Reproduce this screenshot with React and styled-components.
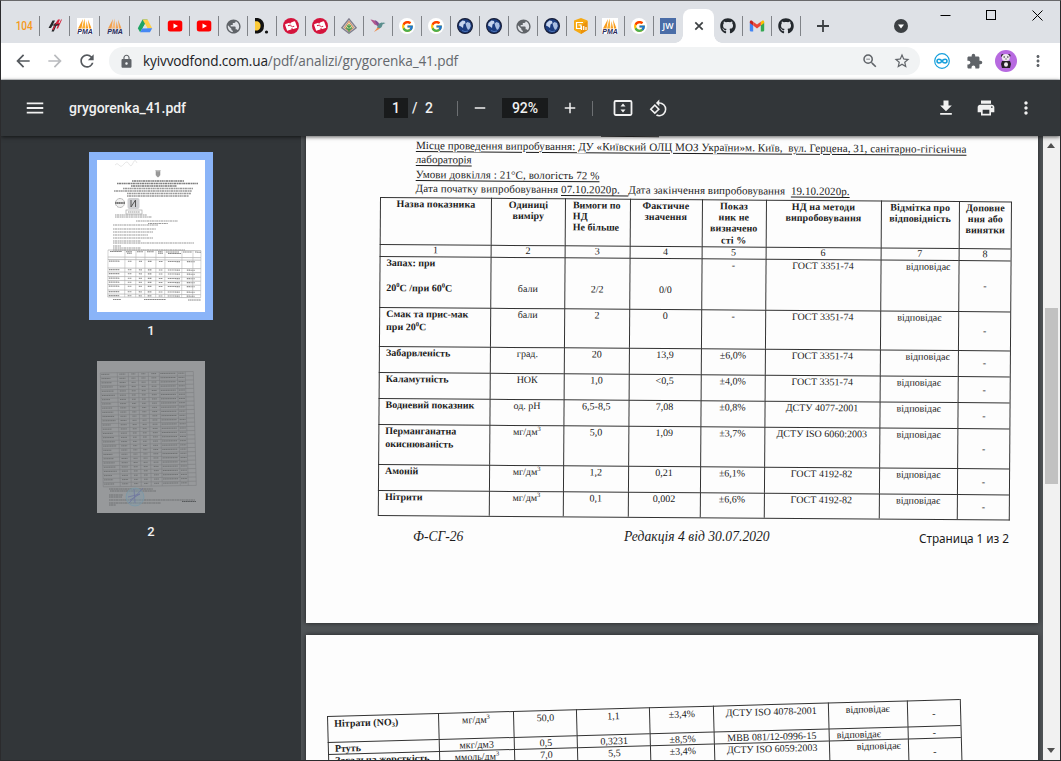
import React from "react";
import styled, { createGlobalStyle, css } from "styled-components";
import {
  MdArrowBack, MdArrowForward, MdRefresh, MdLock, MdMenu, MdPrint, MdMoreVert,
  MdPublic, MdExtension, MdStarBorder, MdFileDownload, MdAdd, MdRemove,
  MdRotate90DegreesCcw, MdOutlineZoomOut,
} from "react-icons/md";
import { FaGithub } from "react-icons/fa";
import { FcGoogle } from "react-icons/fc";

const Global = createGlobalStyle`
  * { box-sizing: border-box; }
  html, body { margin: 0; padding: 0; overflow: hidden; }
  svg { display: block; flex: none; }
`;

/* ---------- window and browser chrome ---------- */

const Window = styled.div`
  width: 1061px;
  height: 761px;
  display: flex;
  flex-direction: column;
  overflow: hidden;
  border: 1px solid #2b2b2d;
  border-top-color: #69696b;
  background: #323639;
`;

const TabStrip = styled.div`
  flex: none;
  height: 42px;
  padding-left: 9px;
  display: flex;
  align-items: flex-end;
  background: #dee1e6;
`;

const Tab = styled.div`
  flex: none;
  width: ${(p) => (p.$wide ? 30 : 29)}px;
  height: 34px;
  padding-right: 1px;
  display: flex;
  align-items: center;
  justify-content: center;
  position: relative;
  &::after {
    content: "";
    display: ${(p) => (p.$last ? "none" : "block")};
    position: absolute;
    right: 0;
    top: 7px;
    width: 1px;
    height: 20px;
    background: #808388;
  }
`;

const ActiveTab = styled.div`
  flex: none;
  width: 31px;
  height: 34px;
  display: flex;
  align-items: center;
  justify-content: center;
  position: relative;
  background: #fff;
  border-radius: 8px 8px 0 0;
  &::before, &::after {
    content: "";
    position: absolute;
    bottom: 0;
    width: 8px;
    height: 8px;
  }
  &::before { left: -8px; background: radial-gradient(circle at 0 0, transparent 7.5px, #fff 8px); }
  &::after { right: -8px; background: radial-gradient(circle at 100% 0, transparent 7.5px, #fff 8px); }
`;

const NewTab = styled.div`
  margin-left: 16px;
  height: 34px;
  display: flex;
  align-items: center;
`;

const TabSearch = styled.div`
  margin-left: 64px;
  height: 34px;
  display: flex;
  align-items: center;
`;

const WindowButtons = styled.div`
  margin-left: auto;
  align-self: flex-start;
  padding: 9px 17px 0 0;
  display: flex;
  gap: 35px;
`;

const NavBar = styled.div`
  flex: none;
  height: 37px;
  padding-left: 12px;
  display: flex;
  align-items: center;
  background: #fff;
  border-bottom: 1px solid #d5d7da;
  color: #5f6368;
`;

const NavButton = styled.div`
  width: 20px;
  margin-right: 12px;
  display: flex;
  justify-content: center;
  color: ${(p) => (p.$off ? "#b9bbbe" : "#55595e")};
`;

const AddressBar = styled.div`
  flex: none;
  width: 811px;
  height: 28px;
  padding: 0 9px 0 10px;
  display: flex;
  align-items: center;
  background: #f1f3f4;
  border-radius: 14px;
`;

const Url = styled.div`
  margin: 0 auto 0 9px;
  font: 13.6px/20px "Open Sans", "Noto Sans", sans-serif;
  letter-spacing: -0.13px;
  color: #64686d;
  white-space: nowrap;
  b { font-weight: 400; color: #202124; }
`;

const AddressIcons = styled.div`
  display: flex;
  align-items: center;
  gap: 14px;
`;

const Extensions = styled.div`
  margin-left: 6px;
  display: grid;
  grid-template-columns: repeat(4, 32px);
  align-items: center;
  justify-items: center;
`;

/* ---------- pdf viewer ---------- */

const PdfBar = styled.div`
  flex: none;
  height: 56px;
  padding: 0 24px 0 23px;
  display: flex;
  align-items: center;
  background: #323639;
  color: #f1f1f1;
  font: 500 14px/20px Roboto, sans-serif;
  position: relative;
  z-index: 2;
  box-shadow: 0 1px 4px rgba(0, 0, 0, 0.65);
`;

const PdfTitle = styled.div`
  width: 315px;
  margin-left: 23px;
  letter-spacing: -0.02px;
`;

const Field = styled.div`
  width: ${(p) => p.$w}px;
  height: 20px;
  background: #191b1c;
  text-align: center;
`;

const PageCount = styled.div`
  width: 49px;
  padding-left: 4px;
  word-spacing: 4px;
`;

const Divider = styled.i`
  width: 1px;
  height: 15px;
  background: #6d7073;
`;

const ZoomGroup = styled.div`
  width: 134px;
  display: flex;
  align-items: center;
  justify-content: space-between;
  padding: 0 13px;
`;

const ViewGroup = styled.div`
  padding-left: 20px;
  display: flex;
  align-items: center;
  gap: 16px;
`;

const PdfActions = styled.div`
  margin-left: auto;
  display: flex;
  gap: 20px;
`;

const Viewer = styled.div`
  flex: 1;
  min-height: 0;
  display: flex;
`;

const Sidebar = styled.div`
  flex: none;
  width: 300px;
  padding-top: 16px;
  display: flex;
  flex-direction: column;
  align-items: center;
  color: #f1f1f1;
  font: 500 13px/20px Roboto, sans-serif;
`;

const Thumb = styled.div`
  padding: 8px;
  background: ${(p) => (p.$active ? "#8ab4f8" : "transparent")};
`;

const ThumbLabel = styled.div`
  height: 33px;
  line-height: 21px;
`;

const Pages = styled.div`
  flex: none;
  width: 742px;
  padding: 0 5px;
  display: flex;
  flex-direction: column;
  gap: 12px;
  background: #505457;
  overflow: hidden;
`;

const Sheet = styled.div`
  flex: none;
  height: ${(p) => p.$h}px;
  padding: ${(p) => p.$pad};
  background: #fdfdfd;
  box-shadow: 0 0 5px rgba(0, 0, 0, 0.6);
  color: #1c1c1c;
  font-family: "Liberation Serif", serif;
  overflow: hidden;
`;

const Scrollbar = styled.div`
  flex: 1;
  padding: 7px 2px 7px 1px;
  display: flex;
  flex-direction: column;
  align-items: center;
  background: #f1f1f1;
`;

const ScrollThumb = styled.div`
  width: 13px;
  height: 176px;
  margin: 160px 0 auto;
  background: #c1c1c1;
`;

/* ---------- scanned document ---------- */

const CutRule = styled.div`
  width: 58px;
  height: 1px;
  margin-left: 295px;
  background: #333;
  transform: rotate(0.6deg);
`;

const Intro = styled.div`
  height: 60px;
  padding: 0.5px 0 0 110px;
  font-size: 11px;
  line-height: 14.6px;
  white-space: pre;
  transform: rotate(0.4deg);
  transform-origin: 110px 0;
`;

const IntroLine = styled.div`
  letter-spacing: ${(p) => p.$ls || 0}px;
`;

const Under = styled.span`
  text-decoration: underline;
  text-decoration-thickness: 1px;
  text-underline-offset: 1.5px;
`;

const Table = styled.div`
  display: grid;
  grid-template-columns: ${(p) => p.$cols};
  grid-template-rows: ${(p) => p.$rows};
  width: max-content;
  margin-left: ${(p) => p.$left}px;
  border-right: 1px solid #333;
  border-bottom: 1px solid #333;
  transform: rotate(${(p) => p.$turn}deg);
  transform-origin: 0 0;
`;

const Cell = styled.div`
  border-left: 1px solid #333;
  border-top: 1px solid #333;
  font-size: 10px;
  line-height: 11.8px;
  white-space: pre;
  text-align: center;
  padding: ${(p) => p.$top ?? 0}px ${(p) => Math.max(0, -(p.$shift || 0))}px 0 ${(p) => Math.max(0, p.$shift || 0)}px;
  ${(p) => p.$kind === "head" && css`font-weight: 700; line-height: 11.2px; letter-spacing: 0.1px;`}
  ${(p) => p.$kind === "name" && css`font-weight: 700; line-height: 12.4px; text-align: left; padding-left: 6px;`}
  ${(p) => p.$kind === "left" && css`font-weight: 700; line-height: 11.2px; text-align: left; padding-left: 7px;`}
  ${(p) => p.$kind === "mid" && css`display: flex; align-items: center; justify-content: center; padding-top: 0;`}
  sup { font-size: 6.5px; line-height: 0; vertical-align: 4px; }
  sub { font-size: 6.5px; line-height: 0; vertical-align: -1.5px; }
`;

const Footer = styled.div`
  display: flex;
  align-items: baseline;
  margin: 11px 0 0 107px;
  font-size: 13.6px;
  line-height: 19px;
  white-space: nowrap;
`;

const FooterCode = styled.i`
  width: 211px;
`;

const FooterEdition = styled.i`
  width: 295px;
  letter-spacing: 0.02px;
`;

const FooterPage = styled.span`
  font: 11.8px/18px "Noto Sans", sans-serif;
  letter-spacing: -0.07px;
  position: relative;
  top: 2px;
`;

const DM3 = <>мг/дм<sup>3</sup></>;

const HEAD = [
  ["head", "Назва показника"], ["head", "Одиниці\nвиміру"], ["left", "Вимоги по\nНД\nНе більше"],
  ["head", "Фактичне\nзначення"], ["head", "Показ\nник не\nвизначено\nсті %"],
  ["head", "НД на методи\nвипробовування"], ["head", "Відмітка про\nвідповідність"], ["head", "Доповне\nння або\nвинятки"],
];

const ROWS = [
  { name: <>{"Запах: при\n\n20"}<sup>0</sup>С /при 60<sup>0</sup>С</>, vals: ["бали", "2/2", "0/0"], err: "-", nd: "ГОСТ 3351-74", shift: 17, top: 25 },
  { name: <>{"Смак та прис-мак\nпри 20"}<sup>0</sup>С</>, vals: ["бали", "2", "0"], err: "-", nd: "ГОСТ 3351-74" },
  { name: "Забарвленість", vals: ["град.", "20", "13,9"], err: "±6,0%", nd: "ГОСТ 3351-74", shift: 17 },
  { name: "Каламутність", vals: ["НОК", "1,0", "<0,5"], err: "±4,0%", nd: "ГОСТ 3351-74" },
  { name: "Водневий показник", vals: ["од. рН", "6,5-8,5", "7,08"], err: "±0,8%", nd: "ДСТУ 4077-2001" },
  { name: "Перманганатна\nокиснюваність", vals: [DM3, "5,0", "1,09"], err: "±3,7%", nd: "ДСТУ ISO 6060:2003" },
  { name: "Амоній", vals: [DM3, "1,2", "0,21"], err: "±6,1%", nd: "ГОСТ 4192-82" },
  { name: "Нітрити", vals: [DM3, "0,1", "0,002"], err: "±6,6%", nd: "ГОСТ 4192-82" },
];

const ROWS2 = [
  { name: <>Нітрати (NO<sub>3</sub>)</>, vals: [DM3, "50,0", "1,1"], err: "±3,4%", nd: "ДСТУ ISO 4078-2001", base: 0.5 },
  { name: "Ртуть", vals: ["мкг/дм3", "0,5", "0,3231"], err: "±8,5%", nd: "МВВ 081/12-0996-15", shift: -19 },
  { name: "Загальна жорсткість", vals: [<>ммоль/дм<sup>3</sup></>, "7,0", "5,5"], err: "±3,4%", nd: "ДСТУ ISO 6059:2003", shift: 20 },
];

function Row({ r }) {
  const base = r.base || 0;
  return (
    <>
      <Cell $kind="name" $top={base}>{r.name}</Cell>
      {r.vals.map((v, i) => <Cell key={i} $top={r.top || base}>{v}</Cell>)}
      <Cell $top={base}>{r.err}</Cell>
      <Cell $top={base}>{r.nd}</Cell>
      <Cell $top={base} $shift={r.shift}>відповідає</Cell>
      <Cell $kind="mid">-</Cell>
    </>
  );
}

/* ---------- tab icons ---------- */

const Svg = ({ s = 16, children, ...rest }) => (
  <svg width={s} height={s} viewBox="0 0 16 16" {...rest}>{children}</svg>
);

const Label104 = styled.span`
  font: 500 12px/16px Roboto, sans-serif;
  color: #f59a1c;
  transform: scaleX(0.84);
`;

const Pma = ({ plain }) => (
  <Svg>
    {!plain && <rect width="16" height="16" fill="#fff" />}
    <path d="M1 10.500 6 1l-1.500 9.500zM11 1.500l3.500 9H12zM9.500 3l1.700 7.500H9z" fill={plain ? "#f3a04b" : "#f99d1c"} />
    <path d="M5 10.500 7.500 .500 8.500 10.500z" fill={plain ? "#f7b877" : "#fbb034"} />
    <text x="8" y="15.800" textAnchor="middle" fontFamily="Liberation Sans, sans-serif" fontStyle="italic" fontWeight="700" fontSize="6.500" textLength="15.500" lengthAdjust="spacingAndGlyphs" fill="#272a5c">PMA</text>
  </Svg>
);

const Hp = () => (
  <Svg>
    <path d="M5.500 2.500 1.500 10H4l1.500-2.500H7L4.500 13.500h2.300L10.500 5H8L7 6.500H6l2-4z" fill="#27282b" />
    <path d="M11 1.500h2L11.500 5h1L14 1.500h1L11 10.500H9.500l1.500-3.500H9L6.500 12H5L9 4.500z" fill="#d2233c" />
    <path d="m8 6.500 4-.500-.500 1.500-4 .500z" fill="#27282b" />
  </Svg>
);

const Drive = () => (
  <Svg>
    <path d="M5.500 1.500h5L8 5.900 3.100 14.200.800 10.300z" fill="#1fa463" />
    <path d="M5.500 1.500h5l4.700 8.800h-4.700z" fill="#ffd04b" />
    <path d="M3.100 14.200h9.800l2.300-3.900H5.500z" fill="#4688f4" />
    <path d="M8 6.300 5.800 10.200h4.500z" fill="#dee1e6" />
  </Svg>
);

const YouTube = () => (
  <Svg>
    <rect x=".8" y="2.500" width="14.500" height="11" rx="2.500" fill="#f00" />
    <path d="m6.500 5.500 4.500 2.500-4.500 2.500z" fill="#fff" />
  </Svg>
);

const DLogo = () => (
  <Svg>
    <path d="M1 0h3a8 8 0 0 1 0 15.500H1z" fill="#111" />
    <path d="M1 3.300h2.500a5 5 0 0 1 0 9.200H1z" fill="#fccb3a" />
    <circle cx="12.500" cy="14" r="1.600" fill="#111" />
  </Svg>
);

const SLogo = () => (
  <Svg>
    <circle cx="8" cy="8" r="8" fill="#d4143c" />
    <g transform="rotate(-20 8 8)">
      <rect x="2.800" y="4.300" width="4.900" height="7" rx=".8" fill="#fff" />
      <rect x="8.500" y="4.700" width="4.900" height="7" rx=".8" fill="#fff" />
      <path d="M5.200 6.800h2.500M8.500 9.200h2.500" stroke="#d4143c" strokeWidth="1" />
      <path d="M7.200 9.500h2M7.200 6h2" stroke="#fff" strokeWidth="1.200" />
    </g>
  </Svg>
);

const Diamond = () => (
  <Svg>
    <path d="m8 .800 7.200 9-7.200 5.500-7.200-5.500z" fill="#c9cdc9" stroke="#7f7d8c" strokeWidth="1.300" />
    <path d="m8 3.200 4.500 6.500L8 13.500 3.500 9.700z" fill="#efd6a0" stroke="#d5734f" strokeWidth=".8" />
    <path d="M8 6v8M5 9.500l3 3 3-3M6 7.500l2 2 2-2" stroke="#3f9b52" strokeWidth="1.100" fill="none" />
  </Svg>
);

const Bird = () => (
  <Svg>
    <path d="M.500 1.500C5 2 8 4 9 8.500L4.500 6.500z" fill="#b0578d" />
    <path d="M4.500 2C8 3 9.500 5.500 10 8H7.500z" fill="#7f4d91" />
    <path d="M7.500 8c2-4 4-3 5.500-3.500l2.500.500-3 1.500C12 9.500 10.500 11 7 10.500z" fill="#5b8f8e" />
    <path d="M7.500 9.500 4 14 10 10.500z" fill="#ef8b4b" />
  </Svg>
);

const GTab = styled.span`
  width: 16px;
  height: 16px;
  display: flex;
  align-items: center;
  justify-content: center;
  border-radius: 50%;
  background: #fff;
`;

const Earth = () => (
  <Svg>
    <circle cx="8" cy="8" r="7.400" fill="#1b3c80" stroke="#171e38" strokeWidth="1.200" />
    <path d="M2.500 5 5.500 2.500l2.500.500.500 2-2 1.500-.500 3.500-2-1.500L2 7.500z" fill="#c7d5ee" />
    <path d="m8.500 5.500 2-1.500 2.500 1 .800 3-1.300 3-1.500 1L9.500 9z" fill="#a9bee2" />
    <path d="M5 12.500q3 2 6 .500" stroke="#4c74b5" fill="none" />
  </Svg>
);

const Fm = () => (
  <Svg>
    <path d="M1 2.500 8 0l6.500 2.500v9.500L8 16l-7-4z" fill="#f6a912" />
    <path d="M8 8l6.500-5v9L8 16z" fill="#eb920b" />
    <path d="M10 4.500H3.500v6H8V7H5.500M8.500 12V8M10.700 12V8M13 12V9" stroke="#fff" strokeWidth="1.200" fill="none" />
  </Svg>
);

const Jw = () => (
  <Svg>
    <rect width="16" height="16" fill="#4a6da7" />
    <text x="8" y="11.300" textAnchor="middle" fontFamily="Open Sans, sans-serif" fontWeight="600" fontSize="8.800" fill="#fff">JW</text>
  </Svg>
);

const Gmail = () => (
  <Svg>
    <path d="M.800 4.500 4.200 7v6.500H2a1.200 1.200 0 0 1-1.200-1z" fill="#4285f4" />
    <path d="M15.200 4.500 11.800 7v6.500H14a1.200 1.200 0 0 0 1.200-1z" fill="#34a853" />
    <path d="M11.800 3.800V7.500L15.200 5V4c0-1.500-1.500-1.700-2.300-1z" fill="#fbbc04" />
    <path d="M.800 4v1l3.400 2.500V3.800L3.300 3C2.500 2.300.800 2.500.800 4z" fill="#c5221f" />
    <path d="M4.200 3.800v3.700L8 10.400l3.800-2.900V3.800L8 6.600z" fill="#ea4335" />
  </Svg>
);

const Google = () => <GTab><FcGoogle size={13} /></GTab>;
const Globe = () => <MdPublic size={17} color="#5f6368" />;
const Octo = () => <FaGithub size={16} color="#24292e" />;

const TABS = [
  () => <Label104>104</Label104>, Hp, Pma, () => <Pma plain />, Drive, YouTube, YouTube, Globe, DLogo, SLogo, SLogo,
  Diamond, Bird, Google, Google, Earth, Earth, Globe, Earth, Fm, Pma, Google, Jw,
];

/* ---------- page previews ---------- */

function Preview1() {
  const text = [
    [35, 21, 52], [20, 23.5, 81], [34, 26, 46], [26, 28.5, 70], [17, 31, 78], [30, 33.5, 64], [30, 36, 62],
    [18, 55, 32], [18, 57, 37], [39, 61, 42], [51, 63.5, 20], [16, 65, 45], [16, 69, 43], [16, 72, 40],
    [16, 75, 35], [16, 78, 40], [16, 81, 28], [16, 83, 81], [16, 86, 8], [16, 88, 28], [16, 90, 72],
  ];
  const rows = [90, 97, 99.5, 108, 112, 116.5, 120.5, 124.5, 130, 134, 137];
  const cols = [11, 28, 39, 48, 59, 68, 85, 96, 104];
  return (
    <svg width="108" height="152" viewBox="0 0 108 152">
      <rect width="108" height="152" fill="#fff" />
      <path d="M18 5q2-3 4 0t5-1 5 0 4-1 4 0" stroke="#dedede" fill="none" strokeWidth=".7" />
      <path d="M59 10v5q1 2 2 2t2-2v-5l-1 3-1-3-1 3z" fill="#999" stroke="#888" strokeWidth=".5" />
      {text.map(([x, y, w], i) => (
        <path key={i} d={`M${x} ${y}h${w}`} stroke={i < 3 ? "#7d7d7d" : "#999"} strokeWidth={i < 7 ? 1.4 : 1} strokeDasharray="1.4 .4 2.3 .5" />
      ))}
      <circle cx="23" cy="43" r="4.500" fill="#f0f0f0" stroke="#999" strokeDasharray="1 .5" />
      <path d="M18 43h10" stroke="#777" strokeWidth="2" strokeDasharray="1.500 .3" />
      <rect x="30.500" y="38" width="12" height="11" rx="2" fill="#cfd0d3" />
      <path d="M34 40v7l4.500-7v7" stroke="#555" fill="none" />
      <rect x="29" y="50" width="16" height="4" fill="none" stroke="#aaa" strokeWidth=".7" />
      <path d="M31 52h12" stroke="#999" strokeDasharray="1.500 .4" />
      <g transform="rotate(.4 11 90)">
        {rows.map((y) => <path key={y} d={`M11 ${y}h93`} stroke="#999" strokeWidth=".6" />)}
        {cols.map((x) => <path key={x} d={`M${x} 90v47`} stroke="#aaa" strokeWidth=".5" />)}
        {rows.slice(2, -1).map((y) => (
          <path key={y} d={`M12 ${y + 1.6}h11m8 0h4m7 0h3m6 0h4m7 0h4m5 0h12m7 0h8`} stroke="#909090" strokeWidth="1.100" strokeDasharray="1.400 .400" />
        ))}
        <path d="M13 91.500h12m4 0h6m5 0h6m4 0h7m4 0h5m3 0h13m4 0h9m3 0h6M30 93h5m26 0h5m5 0h13" stroke="#888" strokeDasharray="1.400 .3" />
      </g>
      <path d="M16 139.500h8m23 0h22m22 .500h13" stroke="#888" strokeDasharray="1.500 .3" />
    </svg>
  );
}

function Preview2() {
  const rows = Array.from({ length: 28 }, (_, i) => 11 + i * 4.22);
  const cols = [3, 20, 31, 41, 51, 62, 80, 88, 96];
  return (
    <svg width="108" height="152" viewBox="0 0 108 152">
      <rect width="108" height="152" fill="#97999b" />
      <g transform="translate(0 1) skewY(-.9) skewX(1.500)">
        {rows.map((y, i) => (
          <g key={y}>
            <path d={`M3 ${y}h93`} stroke="#7c7e80" strokeWidth=".6" />
            {i < 27 && <path d={`M4 ${y + 1.5}h${8 + ((i * 7) % 6)}M22 ${y + 1.5}h6M34 ${y + 1.5}h4M44 ${y + 1.5}h4M54 ${y + 1.5}h5M63 ${y + 1.5}h15M81 ${y + 1.5}h6`} stroke="#6c6e70" strokeWidth=".9" strokeDasharray="1.400 .300" />}
          </g>
        ))}
        {cols.map((x) => <path key={x} d={`M${x} 11v114`} stroke="#7e8082" strokeWidth=".6" />)}
      </g>
      <path d="M12 128h44M13 130h46M12 134h14M12 136h13M12 139h86M12 142h52M12 144h7" stroke="#6c6e70" strokeWidth=".9" strokeDasharray="1.500 .300 2.500 .400" />
      <circle cx="38" cy="136" r="9" fill="#819cab" fillOpacity=".45" stroke="#7898a8" strokeWidth=".8" />
      <path d="m32 142 14-15m-15 9 12-3m-6-5 1 14m-5-3 10-6" stroke="#7077a0" strokeWidth=".8" />
      <path d="M85 140.500h14" stroke="#55585a" strokeDasharray="1.500 .3" />
    </svg>
  );
}

/* ---------- page ---------- */

export default function App() {
  return (
    <Window>
      <Global />
      <TabStrip>
        {TABS.map((Icon, i) => <Tab key={i} $wide={i < 6} $last={i === 22}><Icon /></Tab>)}
        <ActiveTab>
          <svg width="10" height="10"><path d="m1.300 1.300 7.400 7.400m0-7.400-7.400 7.400" stroke="#3c4043" strokeWidth="1.700" /></svg>
        </ActiveTab>
        <Tab><Octo /></Tab>
        <Tab><Gmail /></Tab>
        <Tab><Octo /></Tab>
        <NewTab>
          <svg width="12" height="12"><path d="M6 0v12M0 6h12" stroke="#3c4043" strokeWidth="1.800" /></svg>
        </NewTab>
        <TabSearch>
          <Svg><circle cx="8" cy="8" r="7" fill="#3c4043" /><path d="M5 6.500h6L8 10.500z" fill="#fff" /></Svg>
        </TabSearch>
        <WindowButtons>
          <svg width="11" height="11"><path d="M.5 5.500h10" stroke="#000" /></svg>
          <svg width="11" height="11"><rect x=".5" y=".5" width="9" height="9" fill="none" stroke="#000" /></svg>
          <svg width="11" height="11"><path d="m.5.5 10 10m0-10-10 10" stroke="#000" /></svg>
        </WindowButtons>
      </TabStrip>

      <NavBar>
        <NavButton><MdArrowBack size={20} /></NavButton>
        <NavButton $off><MdArrowForward size={20} /></NavButton>
        <NavButton><MdRefresh size={20} /></NavButton>
        <AddressBar>
          <MdLock size={15} />
          <Url><b>kyivvodfond.com.ua</b>/pdf/analizi/grygorenka_41.pdf</Url>
          <AddressIcons>
            <MdOutlineZoomOut size={18} />
            <MdStarBorder size={18} />
          </AddressIcons>
        </AddressBar>
        <Extensions>
          <Svg>
            <circle cx="8" cy="8" r="7.300" fill="#fff" stroke="#159fdc" strokeWidth="1.200" />
            <path d="M8 8C6.500 5.500 3 5.500 3 8s3.500 2.500 5 0 5-2.500 5 0-3.500 2.500-5 0z" fill="none" stroke="#159fdc" strokeWidth="1.500" />
          </Svg>
          <MdExtension size={17} />
          <svg width="22" height="22" viewBox="0 0 22 22">
            <circle cx="11" cy="11" r="11" fill="#b76ae0" />
            <circle cx="7.500" cy="5.500" r="1.500" fill="#29242c" />
            <circle cx="14" cy="5.500" r="1.500" fill="#29242c" />
            <ellipse cx="10.800" cy="7.500" rx="4" ry="3.500" fill="#eeeaee" />
            <path d="M7 11h8l1 3-1 4H7l-1-4z" fill="#241f27" />
            <ellipse cx="11" cy="14.500" rx="2" ry="2.200" fill="#eeeaee" />
            <path d="M8.500 7h1.500m2 0h1.500m-3 2h1" stroke="#29242c" />
          </svg>
          <MdMoreVert size={18} />
        </Extensions>
      </NavBar>

      <PdfBar>
        <MdMenu size={22} />
        <PdfTitle>grygorenka_41.pdf</PdfTitle>
        <Field $w={24}>1</Field>
        <PageCount>/ 2</PageCount>
        <Divider />
        <ZoomGroup>
          <MdRemove size={18} />
          <Field $w={46}>92%</Field>
          <MdAdd size={18} />
        </ZoomGroup>
        <Divider />
        <ViewGroup>
          <svg width="20" height="18" viewBox="0 0 20 18">
            <rect x="1.500" y="2" width="17" height="14" rx="1.200" fill="none" stroke="#f1f1f1" strokeWidth="1.800" />
            <path d="m10 4.500 2.500 3h-5zM10 13.500l2.500-3h-5z" fill="#f1f1f1" />
          </svg>
          <MdRotate90DegreesCcw size={19} />
        </ViewGroup>
        <PdfActions>
          <MdFileDownload size={20} />
          <MdPrint size={20} />
          <MdMoreVert size={20} />
        </PdfActions>
      </PdfBar>

      <Viewer>
        <Sidebar>
          <Thumb $active><Preview1 /></Thumb>
          <ThumbLabel>1</ThumbLabel>
          <Thumb><Preview2 /></Thumb>
          <ThumbLabel>2</ThumbLabel>
        </Sidebar>

        <Pages>
          <Sheet $h={487} $pad="0">
            <CutRule />
            <Intro>
              <IntroLine $ls={0.095}><Under>{"Місце проведення випробування: ДУ «Київский ОЛЦ МОЗ України»м. Київ,  вул. Герцена, 31, санітарно-гігієнічна"}</Under></IntroLine>
              <IntroLine $ls={0.05}><Under>лабораторія</Under></IntroLine>
              <IntroLine $ls={0.1}><Under>Умови довкілля : 21°С, вологість 72 %</Under></IntroLine>
              <IntroLine $ls={0.085}>{"Дата початку випробовування "}<Under>{"07.10.2020р.   "}</Under>{"Дата закінчення випробовування  "}<Under>19.10.2020р.</Under></IntroLine>
            </Intro>
            <Table
              $left={74}
              $turn={0.4}
              $cols="111px 74px 64.5px 72px 64px 115px 78.5px 52px"
              $rows="46.5px 12.7px 51.2px 38.2px 26.4px 26.4px 26px 39.5px 26.2px 25.2px"
            >
              {HEAD.map(([kind, label]) => <Cell key={label} $kind={kind}>{label}</Cell>)}
              {[1, 2, 3, 4, 5, 6, 7, 8].map((n) => <Cell key={n} $kind="mid">{n}</Cell>)}
              {ROWS.map((r, i) => <Row key={i} r={r} />)}
            </Table>
            <Footer>
              <FooterCode>Ф-СГ-26</FooterCode>
              <FooterEdition>Редакція 4 від 30.07.2020</FooterEdition>
              <FooterPage>Страница 1 из 2</FooterPage>
            </Footer>
          </Sheet>
          <Sheet $h={200} $pad="81px 0 0">
            <Table
              $left={21}
              $turn={-1.54}
              $cols="110.7px 75.2px 63.6px 72.8px 64px 114.6px 78.7px 53.4px"
              $rows="26px 12.3px 27px"
            >
              {ROWS2.map((r, i) => <Row key={i} r={r} />)}
            </Table>
          </Sheet>
        </Pages>

        <Scrollbar>
          <svg width="8" height="5"><path d="M0 5 4 0l4 5z" fill="#505050" /></svg>
          <ScrollThumb />
          <svg width="8" height="5"><path d="m0 0 4 5 4-5z" fill="#505050" /></svg>
        </Scrollbar>
      </Viewer>
    </Window>
  );
}
